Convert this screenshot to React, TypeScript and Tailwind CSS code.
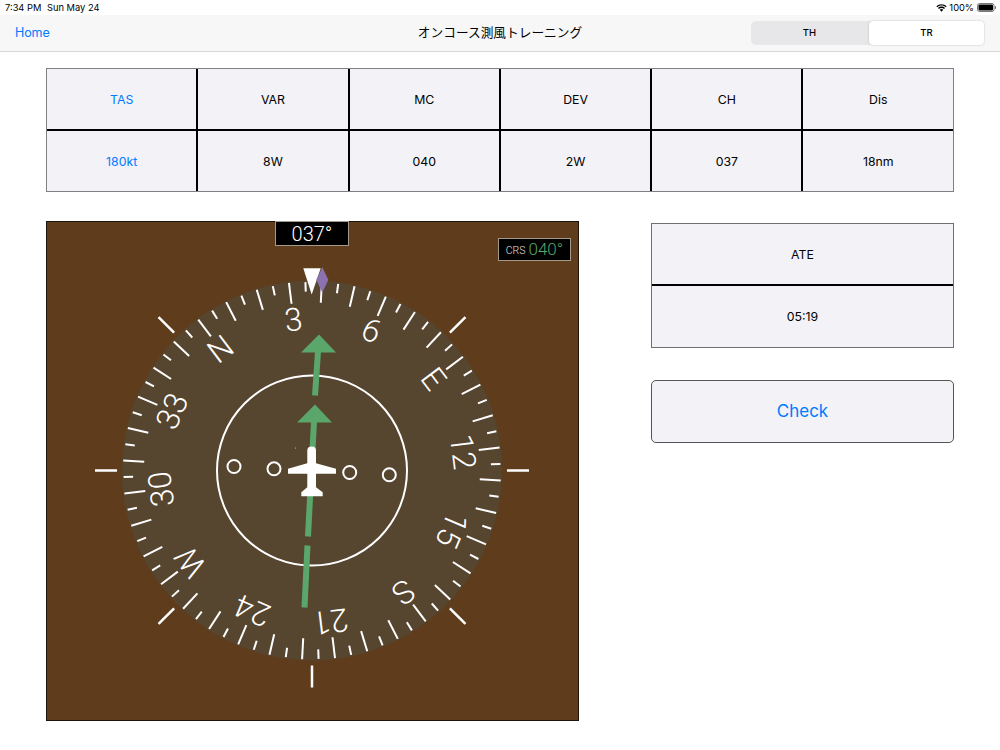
const blue = 'text-[#007aff]';

const topCols = [
  { head: 'TAS', value: '180kt', accent: true },
  { head: 'VAR', value: '8W' },
  { head: 'MC', value: '040' },
  { head: 'DEV', value: '2W' },
  { head: 'CH', value: '037' },
  { head: 'Dis', value: '18nm' }
];

const labels: Record<number, string> = {
  0: 'N',
  30: '3',
  60: '6',
  90: 'E',
  120: '12',
  150: '15',
  180: 'S',
  210: '21',
  240: '24',
  270: 'W',
  300: '30',
  330: '33'
};

function Cell({
  children,
  accent,
  first,
  last,
  tall
}: {
  children: React.ReactNode;
  accent?: boolean;
  first?: boolean;
  last?: boolean;
  tall?: boolean;
}) {
  return (
    <div
      className={`flex items-center justify-center bg-[#f2f2f7] pt-[2px] text-[12.3px] ${
        first ? 'h-[62px] border-b-2 border-black' : tall ? 'h-[61px]' : 'h-[60px]'
      } ${last ? '' : 'border-r-2 border-black'} ${accent ? blue : 'text-black'}`}
    >
      {children}
    </div>
  );
}

function StatusBar() {
  return (
    <div className="flex h-[15px] items-center justify-between bg-white pl-[5px] pr-[3px] text-[9.3px] text-black">
      <div className="flex">
        <span className="w-[42px]">7:34 PM</span>
        <span>Sun May 24</span>
      </div>
      <div className="flex items-center gap-[2px]">
        <svg width="11" height="8" viewBox="0 0 22 16" fill="#000">
          <path d="M11 3c3.300 0 6.300 1.300 8.500 3.400l1.800-1.900C18.600 2 15 .4 11 .4S3.400 2 .7 4.500l1.800 1.900C4.700 4.300 7.700 3 11 3z" />
          <path d="M11 7.800c2 0 3.800.8 5.100 2l1.800-1.900C16.100 6.200 13.700 5.200 11 5.200S5.900 6.200 4.100 7.900l1.800 1.900c1.300-1.200 3.100-2 5.100-2z" />
          <path d="M11 10.200c-1.400 0-2.600.5-3.500 1.400L11 15.400l3.500-3.800c-.9-.9-2.100-1.400-3.500-1.400z" />
        </svg>
        <span>100%</span>
        <svg width="20" height="9" viewBox="0 0 20 9" className="ml-[1px]">
          <rect x="0.5" y="0.5" width="16.500" height="8" rx="2" fill="none" stroke="#777" />
          <rect x="1.500" y="1.500" width="14.500" height="6" rx="1" fill="#000" />
          <rect x="18" y="3" width="1" height="3" rx="0.500" fill="#777" />
        </svg>
      </div>
    </div>
  );
}

function NavBar() {
  return (
    <div className="relative flex h-[37px] items-center justify-between border-b border-[#d9d9db] bg-[#f7f7f8] pl-[15px] pr-[16px]">
      <span className={`pt-[1px] text-[12.5px] tracking-[-0.1px] ${blue}`}>Home</span>
      <span className="absolute left-0 right-0 text-center text-[12.7px] text-black">
        オンコース測風トレーニング
      </span>
      <div className="relative flex h-[24px] w-[233px] rounded-[5px] bg-[#e7e7e9] text-[9.5px] font-medium text-black">
        <div className="flex flex-1 items-center justify-center pr-[1px]">TH</div>
        <div className="flex w-[115px] items-center justify-center rounded-[4px] bg-white shadow-[0_0_2px_rgba(0,0,0,0.25)]">
          TR
        </div>
      </div>
    </div>
  );
}

function polar(deg: number, r: number) {
  const a = ((deg - 37) * Math.PI) / 180;
  return { x: 266 + r * Math.sin(a), y: 249 - r * Math.cos(a) };
}

function Compass() {
  const ticks = [];
  for (let d = 0; d < 360; d += 5) {
    const long = d % 10 === 0;
    const p1 = polar(d, long ? 189 : 188.5);
    const p2 = polar(d, long ? 168 : 179);
    ticks.push(
      <line key={d} x1={p1.x} y1={p1.y} x2={p2.x} y2={p2.y} stroke="#fff" strokeWidth="2" />
    );
  }

  // fixed marks around the card, the top one is replaced by the white pointer
  const marks = [45, 90, 135, 180, 225, 270, 315].map((d) => {
    const a = (d * Math.PI) / 180;
    return (
      <line
        key={d}
        x1={266 + 195 * Math.sin(a)}
        y1={249 - 195 * Math.cos(a)}
        x2={266 + 217 * Math.sin(a)}
        y2={249 - 217 * Math.cos(a)}
        stroke="#fff"
        strokeWidth="2.500"
      />
    );
  });

  return (
    <div className="relative h-[500px] w-[533px] shrink-0 border border-[#1c140c] bg-[#5f3d1c]">
      <svg width="531" height="498" viewBox="1 0.5 531 498" className="block">
        <circle cx="266" cy="249" r="190" fill="#56452f" />
        {ticks}
        {marks}
        {Object.entries(labels).map(([d, t]) => {
          const deg = Number(d);
          const p = polar(deg, 152);
          return (
            <text
              key={d}
              x={p.x}
              y={p.y}
              fill="#fff"
              fontSize="32"
              fontWeight="300"
              fontFamily="Roboto, sans-serif"
              textAnchor="middle"
              dominantBaseline="central"
              transform={`rotate(${deg - 37} ${p.x} ${p.y})`}
            >
              {t}
            </text>
          );
        })}
        <circle cx="266" cy="249" r="95" fill="none" stroke="#fff" strokeWidth="2" />
        <line x1="272" y1="130" x2="269" y2="174" stroke="#5ba66b" strokeWidth="6" />
        <polygon points="273,113 255,131 290,131" fill="#5ba66b" />
        <line x1="268" y1="200" x2="262" y2="315" stroke="#5ba66b" strokeWidth="6" />
        <polygon points="269,183 251,201 286,201" fill="#5ba66b" />
        <line x1="261.500" y1="324" x2="258.500" y2="386" stroke="#5ba66b" strokeWidth="6" />
        <circle cx="188" cy="245" r="6.500" fill="none" stroke="#fff" strokeWidth="2" />
        <circle cx="228" cy="247.300" r="6.500" fill="none" stroke="#fff" strokeWidth="2" />
        <circle cx="303.700" cy="251" r="6.500" fill="none" stroke="#fff" strokeWidth="2" />
        <circle cx="343.300" cy="253.300" r="6.500" fill="none" stroke="#fff" strokeWidth="2" />
        <circle cx="249.500" cy="226.500" r="0.600" fill="#c9c4bb" />
        <path
          d="M261.300 229q0-4 4.400-4q4.300 0 4.300 4V241.700L290 247.300V252.300H270V265.700L276.700 270.700V274.700H255.300V270.700L261.300 265.700V252.300H242V247.300L261.300 241.700Z"
          fill="#fff"
        />
        <polygon points="257.300,46.700 274.700,46.700 265.700,73" fill="#fff" />
        <polygon points="276.300,45.700 282.300,58.300 276.300,71.300 270.300,58.300" fill="#8b72ae" />
      </svg>
      <div className="absolute left-[228px] top-[-1px] flex h-[25px] w-[74px] items-center justify-center border border-[#a39a8c] bg-black text-[20px] font-light text-white [font-family:Roboto,sans-serif]">
        037°
      </div>
      <div className="absolute left-[451px] top-[16px] flex h-[23px] w-[73px] items-center justify-center gap-[3px] border border-[#a39a8c] bg-black [font-family:Roboto,sans-serif]">
        <span className="mt-[2px] text-[10.5px] font-light text-[#e0e0e0]">CRS</span>
        <span className="text-[17px] font-light text-[#5ba66b]">040°</span>
      </div>
    </div>
  );
}

export default function App() {
  return (
    <div className="h-[750px] w-[1000px] overflow-hidden bg-white [font-family:Inter,'Noto_Sans_CJK_JP',sans-serif]">
      <StatusBar />
      <NavBar />
      <div className="flex flex-col px-[46px] pt-[16px]">
        <div className="grid grid-cols-[repeat(5,151.3px)_1fr] border border-[#808080]">
          {topCols.map((c, i) => (
            <Cell key={c.head} accent={c.accent} first last={i === 5}>
              {c.head}
            </Cell>
          ))}
          {topCols.map((c, i) => (
            <Cell key={c.value} accent={c.accent} last={i === 5}>
              {c.value}
            </Cell>
          ))}
        </div>
        <div className="mt-[29px] flex justify-between">
          <Compass />
          <div className="flex w-[303px] flex-col pt-[2px]">
            <div className="flex flex-col border border-[#707070]">
              <Cell first last>
                ATE
              </Cell>
              <Cell last tall>
                05:19
              </Cell>
            </div>
            <button
              className={`mt-[32px] flex h-[63px] items-center justify-center rounded-[5px] border border-[#555] bg-[#f2f2f7] pt-[1px] text-[17px] ${blue}`}
            >
              Check
            </button>
          </div>
        </div>
      </div>
    </div>
  );
}
